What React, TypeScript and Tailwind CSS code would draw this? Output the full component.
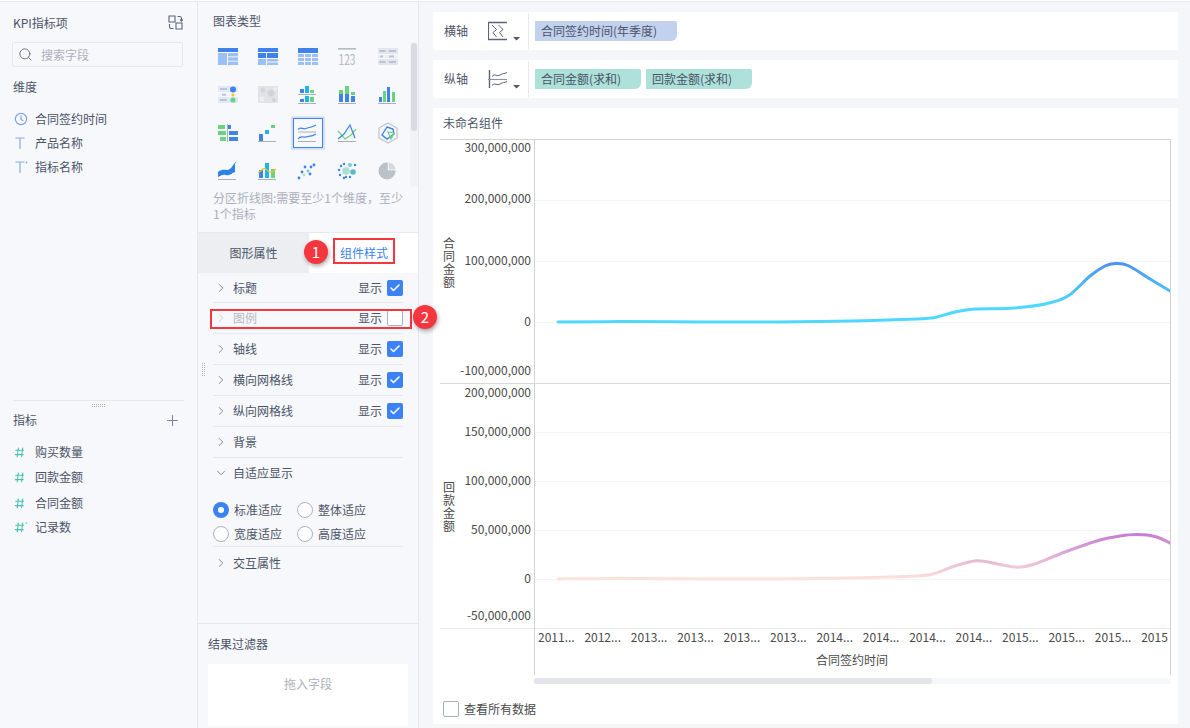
import type { ReactNode } from "react";
import { Check, ChevronDown, ChevronRight, Plus, Search } from "lucide-react";

const B = "#3f82ea";
const L = "#9cc0f3";
const G = "#69d37d";
const C = "#1fb5ea";
const AX = "#a9b0bd";

/** Catmull-Rom through the sampled points, good enough for the chart curves. */
function smooth(p: number[][]) {
  let d = `M${p[0][0]} ${p[0][1]}`;
  for (let i = 0; i < p.length - 1; i++) {
    const a = p[Math.max(i - 1, 0)];
    const b = p[i];
    const c = p[i + 1];
    const e = p[Math.min(i + 2, p.length - 1)];
    d += ` C${b[0] + (c[0] - a[0]) / 6} ${b[1] + (c[1] - a[1]) / 6} ${c[0] - (e[0] - b[0]) / 6} ${c[1] - (e[1] - b[1]) / 6} ${c[0]} ${c[1]}`;
  }
  return d;
}

const UPPER = [
  [558, 322], [620, 321.6], [700, 322], [780, 322], [850, 321], [917, 319], [935, 317.5], [955, 312],
  [975, 309], [1010, 308.3], [1045, 304], [1068, 296], [1090, 276], [1105, 266], [1115, 263.5], [1128, 265.5], [1150, 279], [1170, 291],
];
const LOWER = [
  [558, 579], [620, 578.4], [700, 579], [780, 579], [850, 578], [917, 576], [935, 573.5], [955, 566],
  [977, 560.7], [997, 564], [1017, 567.2], [1035, 564], [1065, 552], [1100, 540], [1120, 536], [1137, 534.5], [1155, 536.5], [1170, 543],
];
const XS = ["2011...", "2012...", "2013...", "2013...", "2013...", "2013...", "2014...", "2014...", "2014...", "2014...", "2015...", "2015...", "2015...", "2015"];

const CHART_ICONS: ReactNode[] = [
  <>
    <rect width="20" height="4" fill={B} />
    <rect y="5" width="9" height="12" fill={L} />
    <rect x="10" y="5" width="10" height="3.4" fill={L} />
    <rect x="10" y="9.3" width="10" height="3.4" fill={L} />
    <rect x="10" y="13.6" width="10" height="3.4" fill={L} />
  </>,
  <>
    <rect width="20" height="4" fill={B} />
    <rect y="5" width="8" height="5" fill={B} />
    <rect x="9" y="5" width="11" height="5" fill={B} />
    <rect y="11" width="8" height="6" fill={L} />
    <rect x="9" y="11" width="11" height="2.5" fill={L} />
    <rect x="9" y="14.5" width="11" height="2.5" fill={L} />
  </>,
  <>
    <rect width="20" height="5" fill={B} />
    {[6, 10, 14].map((y) =>
      [0, 7, 14].map((x) => <rect key={`${x}-${y}`} x={x} y={y} width="6" height="3" fill={L} />),
    )}
  </>,
  <>
    <rect width="18" height="1.6" fill="#b5bac4" />
    <text x="9" y="16.5" textAnchor="middle" fontSize="15" fill="#b5bac4" textLength="17" lengthAdjust="spacingAndGlyphs">123</text>
  </>,
  <>
    <rect width="20" height="6" fill="#e3e6ee" />
    <rect y="6.5" width="20" height="4" fill="#f0f1f5" />
    <rect y="11" width="20" height="6" fill="#e3e6ee" />
    <rect x="1.5" y="2" width="6" height="2" fill="#bcc2ce" />
    <rect x="11" y="2" width="7" height="2" fill="#bcc2ce" />
    <rect x="2" y="7.5" width="3" height="2" fill="#bcc2ce" />
    <rect x="11" y="7.5" width="5" height="2" fill="#bcc2ce" />
    <rect x="1.5" y="13" width="6" height="2" fill="#bcc2ce" />
    <rect x="11" y="13" width="7" height="2" fill="#bcc2ce" />
  </>,
  <>
    <rect width="20" height="6" fill="#dfe9fa" />
    <rect y="7" width="20" height="3.5" fill="#f0f4fc" />
    <rect y="11" width="20" height="6" fill="#dfe9fa" />
    <rect x="2" y="2" width="7" height="2" fill="#bcc6d8" />
    <rect x="4" y="7.7" width="4" height="2" fill="#bcc6d8" />
    <rect x="2" y="13" width="7" height="2" fill="#bcc6d8" />
    <circle cx="15" cy="3.5" r="3" fill={B} />
    <circle cx="15" cy="9" r="1.5" fill="#f7c325" />
    <circle cx="15" cy="14" r="2.6" fill={G} />
  </>,
  <>
    <rect width="20" height="17" fill="#e2e3e7" />
    <circle cx="5" cy="4" r="2.5" fill="#d3d5da" />
    <circle cx="13" cy="7" r="3.5" fill="#d0d2d8" />
    <circle cx="4" cy="13" r="2.4" fill="#eceef1" />
    <circle cx="16" cy="14" r="2" fill="#d0d2d8" />
    <circle cx="17" cy="3" r="2" fill="#eceef1" />
  </>,
  <>
    <rect x="2" y="3" width="4" height="4" fill={B} />
    <rect x="7" y="0" width="4" height="7" fill={C} />
    <rect x="12" y="4" width="4" height="3" fill={G} />
    <rect y="8" width="18" height="1" fill={AX} />
    <rect x="2" y="13" width="4" height="3" fill={B} />
    <rect x="7" y="10" width="4" height="6" fill={C} />
    <rect x="12" y="11" width="4" height="5" fill={G} />
    <rect y="17" width="18" height="1" fill={AX} />
  </>,
  <>
    <rect x="1" y="4" width="4" height="4" fill={G} />
    <rect x="1" y="8" width="4" height="8" fill={B} />
    <rect x="7" y="0" width="4" height="8" fill={G} />
    <rect x="7" y="8" width="4" height="8" fill={B} />
    <rect x="13" y="6" width="4" height="3" fill={G} />
    <rect x="13" y="10" width="4" height="6" fill={B} />
    <rect y="17" width="18" height="1" fill={AX} />
  </>,
  <>
    <rect x="1" y="11" width="3" height="5" fill={B} />
    <rect x="5" y="5" width="3" height="11" fill={G} />
    <rect x="9" y="1" width="3" height="15" fill={B} />
    <rect x="14" y="6" width="3" height="10" fill={G} />
    <rect y="17" width="18" height="1" fill={AX} />
  </>,
  <>
    <rect x="0" y="1" width="7" height="4" fill={G} />
    <rect x="10" y="1" width="3" height="4" fill={B} />
    <rect x="0" y="7" width="8" height="4" fill={G} />
    <rect x="11" y="7" width="9" height="4" fill={B} />
    <rect x="2" y="13" width="6" height="4" fill={G} />
    <rect x="11" y="13" width="9" height="4" fill={B} />
    <rect x="9" y="0" width="1" height="18" fill={AX} />
  </>,
  <>
    <rect x="1" y="10" width="4" height="7" fill={B} />
    <rect x="7" y="6" width="4" height="4" fill={C} />
    <rect x="13" y="1" width="4" height="3" fill={G} />
    <rect y="17" width="18" height="1" fill={AX} />
  </>,
  <>
    <path d="M0 5.5C3 2 5 6 8 4.5S13 4 18 1" fill="none" stroke={B} strokeWidth="1.2" />
    <rect y="7.5" width="18" height="1" fill={AX} />
    <path d="M0 15C3 11 5 14 8 13S13 13 18 10" fill="none" stroke={B} strokeWidth="1.2" />
    <rect y="17" width="18" height="1" fill={AX} />
  </>,
  <>
    <path d="M0 7L7 15L13 11L18 5" fill="none" stroke={G} strokeWidth="1.2" />
    <path d="M0 15L6 10L12 1L17 14" fill="none" stroke={B} strokeWidth="1.2" />
    <rect y="17" width="18" height="1" fill={AX} />
  </>,
  <>
    <path d="M10 -1L19 4V14L10 19L1 14V4Z" fill="none" stroke="#c0c4cc" strokeWidth="1.2" />
    <path d="M9 3L15 5L16 10L9 15L4 11Z" fill="none" stroke={B} strokeWidth="1.4" />
    <path d="M10 8L16 9L13 15Z" fill="none" stroke={G} strokeWidth="1.2" />
  </>,
  <>
    <path d="M0 10C4 7 6 8 9 8S14 5 17 1V10C14 11 12 14 8 13S3 14 0 15Z" fill="#2d82e6" />
    <path d="M14 5L18 0" stroke={C} strokeWidth="1" />
    <rect y="17" width="18" height="1" fill={AX} />
  </>,
  <>
    <rect x="1" y="8" width="4" height="8" fill={B} />
    <rect x="7" y="1" width="4" height="15" fill={C} />
    <rect x="13" y="7" width="4" height="9" fill={G} />
    <path d="M0 11C4 7 7 5 9 8S14 11 18 7" fill="none" stroke="#f3c32f" strokeWidth="1.1" />
    <rect y="17" width="18" height="1" fill={AX} />
  </>,
  <>
    {[[1, 16, B], [4, 10, B], [6, 13, "#a8e0d2"], [10, 9, "#7cc9d6"], [13, 5, B], [12, 12, B], [16, 3, B], [7, 5, B]].map(
      ([x, y, f], i) => (
        <circle key={i} cx={x as number} cy={y as number} r="1.4" fill={f as string} />
      ),
    )}
  </>,
  <>
    <circle cx="8" cy="9" r="3.8" fill="#a8e0d2" />
    <circle cx="15" cy="10" r="2.8" fill="#5cb8c9" />
    <circle cx="12" cy="3" r="2" fill="#7cc9d6" />
    {[[1, 8], [2, 13], [6, 2], [3, 4], [8, 15], [12, 15], [17, 3], [6, 16]].map(([x, y], i) => (
      <circle key={i} cx={x} cy={y} r="1.2" fill={B} />
    ))}
  </>,
  <>
    <circle cx="9" cy="9" r="8.5" fill="#bcc1c9" />
    <path d="M9.8 0.2A9 9 0 0 1 18 8.2H9.8Z" fill="#fff" />
    <path d="M10.6 0.6A8.5 8.5 0 0 1 17.6 7.4H10.6Z" fill="#d5d8dd" />
  </>,
];

const FIELD_ROWS = [
  { name: "合同签约时间", icon: <ClockIcon /> },
  { name: "产品名称", icon: <TIcon /> },
  { name: "指标名称", icon: <TIcon star /> },
];

const MEASURES = [
  { name: "购买数量", h: "h-[25px]" },
  { name: "回款金额", h: "h-[26px]" },
  { name: "合同金额", h: "h-[25px]" },
  { name: "记录数", star: true, h: "h-[24px]" },
];

const STYLE_ROWS = [
  { name: "标题", h: "h-[30px]", on: true },
  { name: "图例", h: "h-[31px]", off: true },
  { name: "轴线", h: "h-[31px]", on: true },
  { name: "横向网格线", h: "h-[31px]", on: true },
  { name: "纵向网格线", h: "h-[31px]", on: true },
  { name: "背景", h: "h-[31px]" },
];

function ClockIcon() {
  return (
    <svg width="14" height="14" viewBox="0 0 14 14" fill="none" stroke="#7ea4e8" strokeWidth="1.2">
      <circle cx="7" cy="7" r="5.6" />
      <path d="M7 3.6V7.4L9.4 8.8" />
    </svg>
  );
}

function TIcon({ star }: { star?: boolean }) {
  return (
    <svg width="14" height="14" viewBox="0 0 14 14" fill="none" stroke="#86a9e8" strokeWidth="1.2">
      <path d="M1.5 2H10.5M6 2V13" />
      {star && <circle cx="12.5" cy="2.5" r="0.9" fill="#86a9e8" stroke="none" />}
    </svg>
  );
}

function HashIcon({ star }: { star?: boolean }) {
  return (
    <svg width="16" height="14" viewBox="0 0 16 14" fill="none" stroke="#45c2b1" strokeWidth="1.2">
      <path d="M5 2L3.6 13M10 2L8.6 13M1.5 5H11.5M1 10H11" />
      {star && <circle cx="14" cy="2.5" r="0.9" fill="#45c2b1" stroke="none" />}
    </svg>
  );
}

function Dots({ cols, rows }: { cols: number; rows: number }) {
  return (
    <svg width={cols * 2} height={rows * 2} fill="#a7adb9">
      {Array.from({ length: cols * rows }).map((_, i) => (
        <rect key={i} x={(i % cols) * 2} y={Math.floor(i / cols) * 2} width="1" height="1" />
      ))}
    </svg>
  );
}

function Box({ on }: { on?: boolean }) {
  if (!on) return <span className="h-4 w-4 rounded-[2px] border border-[#aab0bd] bg-white" />;
  return (
    <span className="flex h-4 w-4 items-center justify-center rounded-[2px] bg-[#3b82f6]">
      <Check size={12} strokeWidth={3.2} color="#fff" />
    </span>
  );
}

function Radio({ on, label }: { on?: boolean; label: string }) {
  return (
    <div className="flex w-[84px] items-center gap-[5px]">
      {on ? (
        <span className="flex h-4 w-4 items-center justify-center rounded-full bg-[#3b82f6]">
          <span className="h-[6px] w-[6px] rounded-full bg-white" />
        </span>
      ) : (
        <span className="h-4 w-4 rounded-full border border-[#aab0bd] bg-white" />
      )}
      <span>{label}</span>
    </div>
  );
}

function AxisRow({ label, icon, children }: { label: string; icon: ReactNode; children: ReactNode }) {
  return (
    <div className="flex h-[38px] items-center bg-white pl-[11px]">
      <span className="w-[44px] text-[#4b5468]">{label}</span>
      <span className="flex h-[20px] w-[40px] items-center">{icon}</span>
      <div className="flex h-[36px] items-center gap-[5px] border-l border-[#e6e8ed] pl-[6px]">{children}</div>
    </div>
  );
}

function Pill({ w, cls, children }: { w: string; cls: string; children: ReactNode }) {
  return (
    <span className={`flex h-5 items-center rounded-tr-[2px] rounded-br-[6px] pl-[6px] text-[#4b5468] ${w} ${cls}`}>
      {children}
    </span>
  );
}

function Chart() {
  return (
    <svg viewBox="433 135 745 555" className="h-[555px] w-[745px]" fontSize="12" fill="#4a4a4a">
      <defs>
        <linearGradient id="up" gradientUnits="userSpaceOnUse" x1="0" y1="263" x2="0" y2="305">
          <stop offset="0" stopColor="#4c92ef" />
          <stop offset="1" stopColor="#4fd8ff" />
        </linearGradient>
        <linearGradient id="low" gradientUnits="userSpaceOnUse" x1="0" y1="534" x2="0" y2="579">
          <stop offset="0" stopColor="#c67dd0" />
          <stop offset="1" stopColor="#fde3da" />
        </linearGradient>
      </defs>

      {[200.5, 261.5, 322.5, 432.5, 481.5, 530.5, 579.5].map((y) => (
        <line key={y} x1="535" x2="1170" y1={y} y2={y} stroke="#f3f4f6" />
      ))}
      <line x1="440" x2="1171" y1="139.5" y2="139.5" stroke="#d2d3d6" />
      <line x1="440" x2="1171" y1="383.5" y2="383.5" stroke="#d8d9dc" />
      <line x1="440" x2="1171" y1="628.5" y2="628.5" stroke="#e6e7e9" />
      <line x1="534.5" x2="534.5" y1="139" y2="675" stroke="#d2d3d6" />
      <line x1="1170.5" x2="1170.5" y1="139" y2="675" stroke="#cfd0d3" />

      {[
        ["300,000,000", 148], ["200,000,000", 199], ["100,000,000", 261], ["0", 322], ["-100,000,000", 371],
        ["200,000,000", 393], ["150,000,000", 432], ["100,000,000", 481], ["50,000,000", 530], ["0", 579], ["-50,000,000", 616],
      ].map(([t, y], i) => (
        <text key={i} x="531" y={(y as number) + 4} textAnchor="end">{t}</text>
      ))}

      <text x="449" y="237" writingMode="vertical-rl" letterSpacing="1">合同金额</text>
      <text x="449" y="481" writingMode="vertical-rl" letterSpacing="1">回款金额</text>

      <clipPath id="plot">
        <rect x="535" y="139" width="635" height="520" />
      </clipPath>
      <g clipPath="url(#plot)">
        <path d={smooth(UPPER)} fill="none" stroke="url(#up)" strokeWidth="3" strokeLinecap="round" />
        <path d={smooth(LOWER)} fill="none" stroke="url(#low)" strokeWidth="3" strokeLinecap="round" />
        {XS.map((t, i) => (
          <text key={i} x={538 + i * 46.4} y="642">{t}</text>
        ))}
      </g>
      <text x="852" y="665" textAnchor="middle">合同签约时间</text>

      <rect x="534" y="678" width="637" height="6" rx="2" fill="#f6f7f9" />
      <rect x="534" y="678" width="398" height="6" rx="2" fill="#e4e5ea" />
    </svg>
  );
}

export default function App() {
  return (
    <div
      className="flex h-[728px] w-[1190px] flex-col overflow-hidden bg-[#f5f6f9] text-[12px] text-[#4b5468]"
      style={{ fontFamily: '"Noto Sans CJK SC", "Noto Sans", sans-serif' }}
    >
      <div className="h-[2px] border-b border-[#e6e8ed] bg-white" />

      <div className="flex flex-1">
        {/* field list */}
        <aside className="flex w-[198px] flex-col border-r border-[#e6e8ed] bg-[#f7f8fb]">
          <div className="h-[398px] px-[12px]">
            <div className="flex h-[40px] items-center justify-between pl-px pr-[2px] pt-[1px]">
              <span>KPI指标项</span>
              <svg width="15" height="15" viewBox="0 0 15 15" fill="none" stroke="#5b6477" strokeWidth="1.1">
                <path d="M1 1H7V7H1ZM8 8H14V14H8Z" />
                <path d="M9.5 1.5H12Q13.5 1.5 13.5 3.5V6M12 4.5L13.5 6.2L15 4.5M5.5 13.5H3Q1.5 13.5 1.5 11.5V9" />
              </svg>
            </div>
            <div className="flex h-[25px] w-[171px] items-center gap-[8px] rounded-[2px] border border-[#e6e8ed] pl-[5px] text-[#aab0bd]">
              <Search size={15} strokeWidth={1.4} color="#5b6477" />
              <span>搜索字段</span>
            </div>
            <div className="flex h-[39px] items-center pl-px">维度</div>
            <div className="pt-px">
              {FIELD_ROWS.map((f) => (
                <div key={f.name} className="flex h-[24px] items-center gap-[7px] pl-[2px]">
                  <span className="flex w-[14px] justify-center">{f.icon}</span>
                  <span>{f.name}</span>
                </div>
              ))}
            </div>
          </div>
          <div className="mx-[13px] flex h-[10px] justify-center border-t border-[#e6e8ed] pt-[3px]">
            <Dots cols={7} rows={2} />
          </div>
          <div className="flex h-[20px] items-center justify-between pl-[13px] pr-[16px] text-[#4b5468]">
            <span>指标</span>
            <Plus size={17} strokeWidth={1.5} color="#7b8394" />
          </div>
          <div className="pt-[9px]">
            {MEASURES.map((m) => (
              <div key={m.name} className={`flex items-center gap-[7px] pl-[14px] ${m.h}`}>
                <span className="flex w-[14px]"><HashIcon star={m.star} /></span>
                <span>{m.name}</span>
              </div>
            ))}
          </div>
        </aside>

        {/* chart type and style settings */}
        <section className="relative flex w-[221px] flex-col border-r border-[#e6e8ed] bg-[#f7f8fb]">
          <div className="flex h-[36px] items-center pl-[15px] pt-[1px]">图表类型</div>
          <div className="flex h-[152px]">
            <div className="ml-[10px] grid w-[200px] grid-cols-5 grid-rows-4">
              {CHART_ICONS.map((ic, i) => (
                <div key={i} className="flex items-center justify-center">
                  <div
                    className={`flex items-center justify-center ${
                      i === 12 ? "h-[30px] w-[30px] border-[1.5px] border-[#3b82f6] outline-[2px] outline-[#d6e2f5]" : ""
                    }`}
                  >
                    <svg width="20" height="18" viewBox="0 0 20 18" overflow="visible">{ic}</svg>
                  </div>
                </div>
              ))}
            </div>
            <div className="mt-[4px] ml-[2px] h-[145px] w-[8px] rounded-full bg-[#f1f2f5] p-px">
              <div className="h-[88px] w-[6px] rounded-full bg-[#dadbe0]" />
            </div>
          </div>
          <p className="h-[42px] w-[208px] pl-[15px] leading-[16px] text-[#aab0bd]">
            分区折线图:需要至少1个维度，至少1个指标
          </p>

          <div className="flex h-[41px] border-t border-[#e6e8ed]">
            <div className="flex w-[111px] items-center justify-center bg-[#eceef1]">图形属性</div>
            <div className="flex flex-1 items-center bg-white pl-[31px] text-[#3b82f6]">组件样式</div>
          </div>

          <div className="px-[15px]">
            {STYLE_ROWS.map((r) => (
              <div key={r.name} className={`flex items-center border-b border-[#e6e8ed] ${r.h}`}>
                <ChevronRight size={14} strokeWidth={1.4} color={r.off ? "#c3c7cf" : "#6b7385"} className="ml-px" />
                <span className={`ml-[5px] ${r.off ? "text-[#b4b9c4]" : ""}`}>{r.name}</span>
                {(r.on || r.off) && (
                  <span className="ml-auto flex items-center gap-[5px]">
                    <span>显示</span>
                    <Box on={r.on} />
                  </span>
                )}
              </div>
            ))}
            <div className="flex h-[29px] items-center">
              <ChevronDown size={14} strokeWidth={1.4} color="#6b7385" className="ml-px" />
              <span className="ml-[5px]">自适应显示</span>
            </div>
            <div className="border-b border-[#e6e8ed] pt-[11px]">
              <div className="flex h-[24px] items-center"><Radio on label="标准适应" /><Radio label="整体适应" /></div>
              <div className="flex h-[24px] items-center"><Radio label="宽度适应" /><Radio label="高度适应" /></div>
            </div>
            <div className="flex h-[31px] items-center">
              <ChevronRight size={14} strokeWidth={1.4} color="#6b7385" className="ml-px" />
              <span className="ml-[5px]">交互属性</span>
            </div>
          </div>

          <div className="mt-auto border-t border-[#e6e8ed] px-[10px] pb-[2px]">
            <div className="flex h-[40px] items-center">结果过滤器</div>
            <div className="flex h-[62px] w-[200px] justify-center bg-white pt-[11px] text-[#aab0bd]">拖入字段</div>
          </div>

          {/* callouts over the panel */}
          <div className="absolute left-[135px] top-[236px] h-[26px] w-[62px] border-[2px] border-[#f5363f]" />
          <div className="absolute left-[12px] top-[307px] h-[20px] w-[202px] border-[2px] border-[#f5363f]" />
          <span className="absolute left-[106px] top-[238px] flex h-6 w-6 items-center justify-center rounded-full bg-[#f5363f] text-[15px] text-white shadow-[1px_2px_4px_rgba(0,0,0,0.35)]">1</span>
          <span className="absolute left-[215px] top-[303px] z-10 flex h-6 w-6 items-center justify-center rounded-full bg-[#f5363f] text-[15px] text-white shadow-[1px_2px_4px_rgba(0,0,0,0.35)]">2</span>
          <div className="absolute left-[4px] top-[361px]"><Dots cols={2} rows={7} /></div>
        </section>

        {/* canvas */}
        <main className="ml-[14px] flex w-[745px] flex-col gap-[10px] pt-[10px] pb-[4px]">
          <AxisRow
            label="横轴"
            icon={
              <svg width="32" height="20" viewBox="0 0 32 20" fill="none" stroke="#5b6477" strokeWidth="1.1">
                <path d="M0.5 1V19" />
                <path d="M0 1.5H19M0 18.5H19" strokeWidth="1.4" />
                <path d="M4 4L8.5 8.5L5 11.5L8.5 16M10.5 4L15 8.5L11.5 11.5L15 16" strokeWidth="1" />
                <path d="M25 16H32L28.5 19.5Z" fill="#4b5468" stroke="none" />
              </svg>
            }
          >
            <Pill w="w-[142px]" cls="bg-[#c2d1ee]">合同签约时间(年季度)</Pill>
          </AxisRow>
          <AxisRow
            label="纵轴"
            icon={
              <svg width="32" height="20" viewBox="0 0 32 20" fill="none" stroke="#5b6477" strokeWidth="1.1">
                <path d="M1.5 1V19" strokeWidth="1.4" />
                <path d="M0 10.5H19" stroke="#8b93a3" />
                <path d="M4 7.5C7 4 9 8 12 6S16 5 19 3.5M4 16.5C7 13 9 17 12 15S16 14 19 12.5" strokeWidth="1" />
                <path d="M25 16H32L28.5 19.5Z" fill="#4b5468" stroke="none" />
              </svg>
            }
          >
            <Pill w="w-[106px]" cls="bg-[#aee1da]">合同金额(求和)</Pill>
            <Pill w="w-[106px]" cls="bg-[#aee1da]">回款金额(求和)</Pill>
          </AxisRow>
          <div className="flex flex-1 flex-col bg-white">
            <div className="flex h-[27px] items-center pl-[10px] pt-[3px]">未命名组件</div>
            <Chart />
            <div className="flex flex-1 items-center gap-[5px] pl-[10px] pt-[4px] text-[#4a4a4a]">
              <Box />
              <span>查看所有数据</span>
            </div>
          </div>
        </main>
      </div>
    </div>
  );
}
